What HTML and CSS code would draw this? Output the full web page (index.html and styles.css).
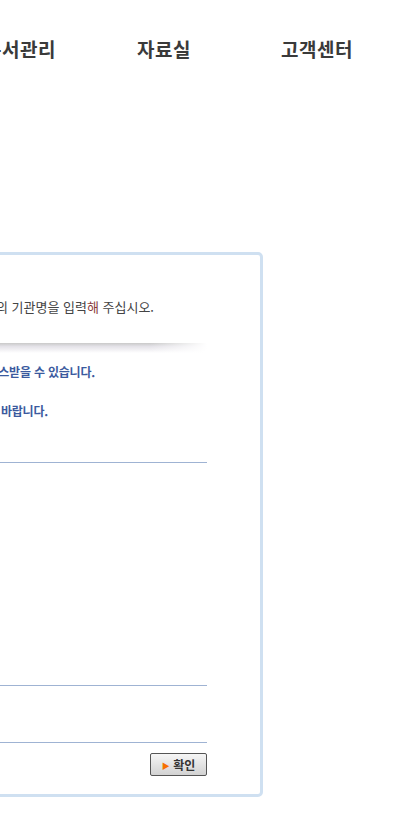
FILE: index.html
```html
<!DOCTYPE html>
<html lang="ko">
<head>
    <meta charset="UTF-8">
    <meta name="viewport" content="width=device-width, initial-scale=1.0">
    <title>기관 확인</title>
    <link rel="stylesheet" href="styles.css">
</head>
<body>
    <div class="page">
        <ul class="gnb">
            <li>문서관리</li>
            <li>자료실</li>
            <li>고객센터</li>
        </ul>

        <div class="box">
            <p class="intro">사용하실 기관의 기관명을 입력<span class="em">해</span> 주십시오.</p>
            <div class="band"></div>
            <p class="notice">기관명을 입력하시면 서비스받을 수 있습니다.</p>
            <p class="notice second">정확하게 입력해 주시기 바랍니다.</p>

            <div class="area-main"></div>
            <div class="area-sub"></div>

            <div class="btn-row">
                <button class="btn" type="button"><span class="arr">&#9654;</span> 확인</button>
            </div>
        </div>
    </div>
</body>
</html>
```

FILE: styles.css
```css
html, body {
    margin: 0;
    padding: 0;
    background: #fff;
    overflow: hidden;
}
body {
    font-family: "Noto Sans CJK KR", "Noto Sans", sans-serif;
    color: #444;
}
.page {
    width: 800px;
    margin-left: -400px;
}
.gnb {
    list-style: none;
    margin: 0;
    padding: 35px 0 0 0;
    margin-left: 384px;
    display: grid;
    grid-template-columns: 153px 144px auto;
    font-size: 19px;
    letter-spacing: 0.5px;
    line-height: 28px;
    font-weight: bold;
    color: #3a3a3a;
    height: 28px;
}
.box {
    margin: 189px 0 0 63px;
    width: 600px;
    box-sizing: border-box;
    border: 3px solid #cfe0f1;
    border-radius: 5px;
    padding: 43px 53px 18px 60px;
}
.intro {
    margin: 0;
    font-size: 13px;
    letter-spacing: 0;
    line-height: 18px;
    color: #444;
    text-align: right;
    padding-right: 53px;
}
.em {
    color: #8a3b3b;
}
.band {
    margin-top: 27px;
    height: 10px;
    background:
        linear-gradient(to right, rgba(255,255,255,0) 88%, #fff 100%),
        linear-gradient(to bottom, #c9c9c9 0, #e4e2e8 35%, #fff 100%);
}
.notice {
    margin: 10px 0 0 0;
    font-size: 12px;
    letter-spacing: -0.2px;
    line-height: 18px;
    font-weight: bold;
    color: #3b5a9e;
    text-align: right;
    padding-right: 112px;
}
.notice.second {
    margin-top: 21px;
    padding-right: 159px;
}
.area-main {
    margin-top: 42px;
    height: 222px;
    border-top: 1px solid #9fb3d3;
    border-bottom: 1px solid #9fb3d3;
}
.area-sub {
    height: 56px;
    border-bottom: 1px solid #9fb3d3;
}
.btn-row {
    display: flex;
    justify-content: flex-end;
    margin-top: 10px;
}
.btn {
    width: 57px;
    height: 23px;
    padding: 0;
    border: 1px solid #555;
    border-radius: 2px;
    background: linear-gradient(to bottom, #f6f6f6, #d2d2d2);
    font-family: "Noto Sans CJK KR", sans-serif;
    font-size: 12px;
    font-weight: bold;
    color: #333;
    cursor: pointer;
}
.arr {
    color: #f66f00;
    font-size: 8px;
    vertical-align: 1px;
}
```
